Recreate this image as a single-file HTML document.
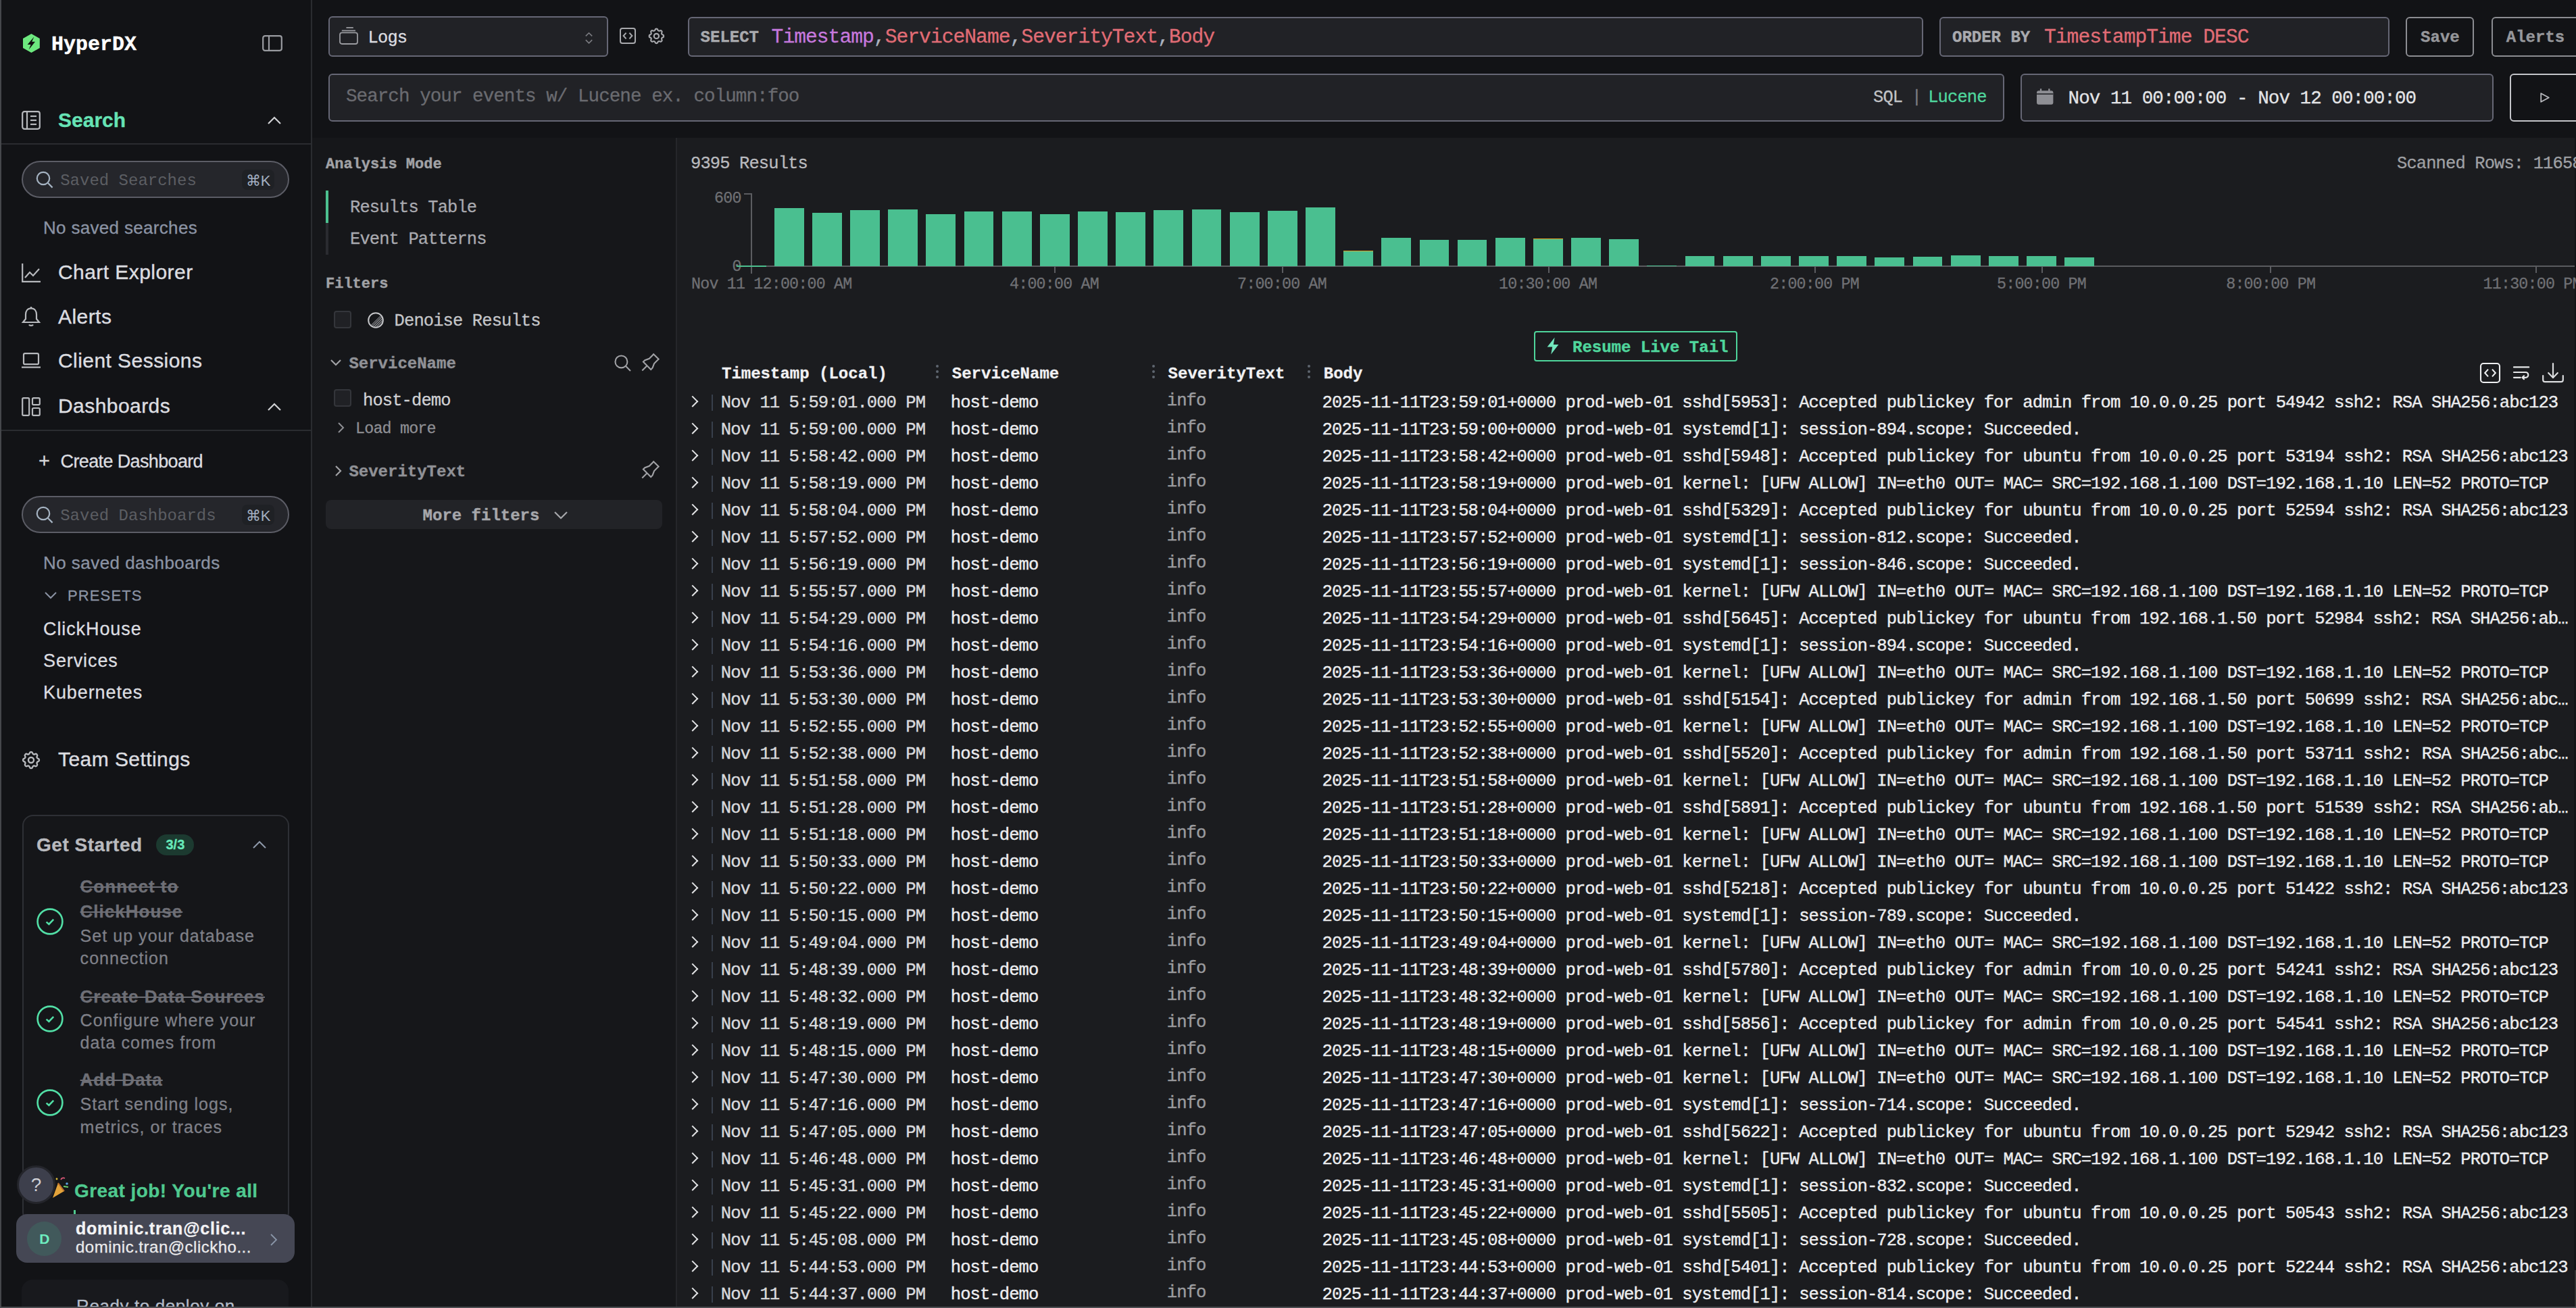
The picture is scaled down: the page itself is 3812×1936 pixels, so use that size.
<!DOCTYPE html>
<html><head><meta charset="utf-8">
<style>
html,body{margin:0;padding:0;background:#121316;overflow:hidden}
body{zoom:2;width:1906px;height:968px;position:relative;font-family:"Liberation Sans",sans-serif;color:#c1c2c5}
.a{position:absolute;white-space:nowrap}
.mono{font-family:"Liberation Mono",monospace}
svg{position:absolute;overflow:visible}
/* sidebar */
#sb{position:absolute;left:0;top:0;width:230px;height:968px;background:#121316;border-right:1px solid #2a2c30}
#lb{position:absolute;left:0;top:0;width:1px;height:968px;background:#45474b}
.nav{position:absolute;left:43px;font-size:15px;color:#dcdde0;line-height:20px;height:20px;letter-spacing:0.22px;margin-top:-0.3px;-webkit-text-stroke:0.2px currentColor}
.sinp{position:absolute;left:16px;width:195.8px;height:25.5px;border:1px solid #5c5d66;border-radius:14px;background:#25262b}
.sinp .ph{position:absolute;left:27.6px;top:1.2px;line-height:25px;font-family:"Liberation Mono",monospace;font-size:12px;color:#5c5e63}
.kbd{position:absolute;left:162px;top:5.5px;width:24px;height:15px;border-radius:4px;background:#1f2125;color:#a3b0c2;font-size:11px;line-height:17px;text-align:center}
.muted{color:#8b93a4}
#sb .a{-webkit-text-stroke:0.15px currentColor}
/* top bar */
.inp{position:absolute;background:#212226;border:1px solid #666775;border-radius:3px;box-sizing:border-box}
.btn{position:absolute;background:#121316;border:1px solid #8c8d92;border-radius:3px;box-sizing:border-box;font-family:"Liberation Mono",monospace;font-weight:bold;-webkit-text-stroke:0.2px currentColor;font-size:12px;color:#96979b;text-align:center}
/* panels */
#fp{position:absolute;left:231px;top:102px;width:269px;height:866px;background:#16171a;border-right:1px solid #25262a}
#rp{position:absolute;left:501px;top:102px;width:1404px;height:865px;background:#1b1c1f}
.lbl{position:absolute;font-family:"Liberation Mono",monospace;white-space:nowrap}
.cb{position:absolute;left:247px;width:11px;height:11px;border:1px solid #34363b;border-radius:2px;background:#202125}
.bar{position:absolute;width:21.9px;background:#4abf90;box-sizing:border-box}
.xl{position:absolute;top:203.4px;font-family:"Liberation Mono",monospace;font-size:11.66px;letter-spacing:-0.4px;-webkit-text-stroke:0.15px currentColor;line-height:14px;color:#6f7074;white-space:nowrap}
.tick{position:absolute;top:197px;width:1px;height:5px;background:#5c5d61}
/* table */
.th{position:absolute;top:268.5px;line-height:17px;font-family:"Liberation Mono",monospace;font-weight:bold;-webkit-text-stroke:0.15px currentColor;font-size:12px;color:#f1f1f3;white-space:nowrap}
.dots{position:absolute;top:269px;width:2px;height:12px}
.dots i{position:absolute;left:0;width:2px;height:2px;border-radius:1px;background:#5f6670}
.row{position:absolute;left:501px;width:1404px;height:20px;font-family:"Liberation Mono",monospace;font-size:12.8px;letter-spacing:-0.48px;-webkit-text-stroke:0.2px currentColor;line-height:20px;color:#ecedef;white-space:nowrap}
.row span{position:absolute;top:1.1px}
.row .chev{left:8.3px;top:6.8px;width:5.2px;height:5.2px;border-right:1.4px solid #e3e4e6;border-bottom:1.4px solid #e3e4e6;transform:rotate(-45deg)}
.row .rdiv{left:25.5px;top:4.5px;width:1px;height:12px;background:#38404c}
.row .c1{left:32.4px;color:#d9dadd}
.row .c2{left:202.4px}
.row .c3{left:362.4px;top:-0.1px;color:#9b9c9f}
.row .c4{left:477.3px;width:930px;overflow:hidden}
</style></head><body>

<!-- ================= SIDEBAR ================= -->
<div id="sb">
  <!-- logo -->
  <svg style="left:16.8px;top:25px" width="12.4" height="14" viewBox="0 0 12.4 14">
    <polygon points="6.2,0 12.4,3.5 12.4,10.5 6.2,14 0,10.5 0,3.5" fill="#6de97f"/>
    <path d="M8.2,2.3 L3.3,8.0 L5.8,8.0 L4.3,11.7 L9.0,5.9 L6.6,5.9 Z" fill="#111"/>
  </svg>
  <div class="a mono" style="left:38px;top:24px;font-size:15px;font-weight:bold;-webkit-text-stroke:0.2px currentColor;color:#fff;line-height:18px">HyperDX</div>
  <svg style="left:194px;top:26px" width="15" height="12" viewBox="0 0 15 12"><rect x="0.6" y="0.6" width="13.8" height="10.8" rx="1.5" fill="none" stroke="#9a9ca1" stroke-width="1.1"/><line x1="5" y1="0.6" x2="5" y2="11.4" stroke="#9a9ca1" stroke-width="1.1"/></svg>

  <!-- Search nav -->
  <svg style="left:16px;top:82px" width="14" height="14" viewBox="0 0 14 14" fill="none" stroke="#b8babe" stroke-width="1.1"><rect x="0.6" y="0.6" width="12.8" height="12.8" rx="1.5"/><line x1="4" y1="0.6" x2="4" y2="13.4"/><line x1="6.5" y1="4" x2="11" y2="4"/><line x1="6.5" y1="7" x2="11" y2="7"/><line x1="6.5" y1="10" x2="11" y2="10"/></svg>
  <div class="a" style="left:43px;top:79px;font-size:15px;font-weight:bold;color:#66e3b5;line-height:20px">Search</div>
  <svg style="left:198px;top:86px" width="10" height="6" viewBox="0 0 10 6"><polyline points="0.5,5.5 5,1 9.5,5.5" fill="none" stroke="#d0d1d4" stroke-width="1.1"/></svg>
  <div style="position:absolute;left:0;top:106px;width:230px;height:1px;background:#2a2c30"></div>

  <div class="sinp" style="top:119.1px">
    <svg style="left:9.5px;top:6.5px" width="13" height="13" viewBox="0 0 13 13" fill="none" stroke="#a5b3c2" stroke-width="1.1"><circle cx="5.5" cy="5.5" r="4.6"/><line x1="8.9" y1="8.9" x2="12.3" y2="12.3"/></svg>
    <div class="ph">Saved Searches</div>
    <div class="kbd">&#8984;K</div>
  </div>
  <div class="a muted" style="left:32px;top:160px;font-size:13px;line-height:17px;letter-spacing:0.16px">No saved searches</div>

  <!-- Chart Explorer -->
  <svg style="left:16px;top:195px" width="14" height="14" viewBox="0 0 14 14" fill="none" stroke="#b8babe" stroke-width="1.1"><polyline points="0.6,0 0.6,13.4 14,13.4"/><polyline points="2.5,10.5 6,6.5 8.5,9 13,4"/></svg>
  <div class="nav" style="top:192px">Chart Explorer</div>
  <!-- Alerts -->
  <svg style="left:16px;top:227px" width="14" height="15" viewBox="0 0 14 15" fill="none" stroke="#b8babe" stroke-width="1.1"><path d="M7,1.2 C4.3,1.2 3,3.4 3,5.8 L3,9 L1,11.5 L13,11.5 L11,9 L11,5.8 C11,3.4 9.7,1.2 7,1.2 Z"/><path d="M5.5,13.2 C6,14.2 8,14.2 8.5,13.2"/><line x1="7" y1="0" x2="7" y2="1.2"/></svg>
  <div class="nav" style="top:225px">Alerts</div>
  <!-- Client Sessions -->
  <svg style="left:16px;top:261px" width="14" height="12" viewBox="0 0 14 12" fill="none" stroke="#b8babe" stroke-width="1.1"><rect x="1.5" y="0.6" width="11" height="8" rx="1"/><line x1="0" y1="10.8" x2="14" y2="10.8"/></svg>
  <div class="nav" style="top:257.5px">Client Sessions</div>
  <!-- Dashboards -->
  <svg style="left:16px;top:294px" width="14" height="14" viewBox="0 0 14 14" fill="none" stroke="#b8babe" stroke-width="1.1"><rect x="0.6" y="0.6" width="5" height="12.8" rx="0.8"/><rect x="8" y="0.6" width="5.4" height="5" rx="0.8"/><rect x="8" y="8" width="5.4" height="5.4" rx="0.8"/></svg>
  <div class="nav" style="top:291px">Dashboards</div>
  <svg style="left:198px;top:298px" width="10" height="6" viewBox="0 0 10 6"><polyline points="0.5,5.5 5,1 9.5,5.5" fill="none" stroke="#d0d1d4" stroke-width="1.1"/></svg>
  <div style="position:absolute;left:0;top:318px;width:230px;height:1px;background:#2a2c30"></div>

  <div class="a" style="left:28.5px;top:332px;font-size:14.5px;line-height:18px;color:#d6d7da">+</div>
  <div class="a" style="left:44.8px;top:332.5px;font-size:13.5px;line-height:18px;color:#dcdde0;letter-spacing:-0.32px">Create Dashboard</div>

  <div class="sinp" style="top:367.1px">
    <svg style="left:9.5px;top:6.5px" width="13" height="13" viewBox="0 0 13 13" fill="none" stroke="#a5b3c2" stroke-width="1.1"><circle cx="5.5" cy="5.5" r="4.6"/><line x1="8.9" y1="8.9" x2="12.3" y2="12.3"/></svg>
    <div class="ph">Saved Dashboards</div>
    <div class="kbd">&#8984;K</div>
  </div>
  <div class="a muted" style="left:32px;top:408px;font-size:13px;line-height:17px;letter-spacing:0.23px">No saved dashboards</div>
  <svg style="left:33px;top:438px" width="9" height="5" viewBox="0 0 9 5"><polyline points="0.5,0.5 4.5,4.5 8.5,0.5" fill="none" stroke="#8b93a4" stroke-width="1"/></svg>
  <div class="a muted" style="left:50px;top:433px;font-size:11px;line-height:16px;letter-spacing:0.56px">PRESETS</div>
  <div class="a" style="left:32px;top:457px;font-size:13.5px;line-height:17px;color:#dcdde0;letter-spacing:0.45px">ClickHouse</div>
  <div class="a" style="left:32px;top:480.5px;font-size:13.5px;line-height:17px;color:#dcdde0;letter-spacing:0.45px">Services</div>
  <div class="a" style="left:32px;top:504px;font-size:13.5px;line-height:17px;color:#dcdde0;letter-spacing:0.45px">Kubernetes</div>

  <svg style="left:15px;top:554.5px" width="16" height="16" viewBox="0 0 24 24" fill="none" stroke="#b8babe" stroke-width="1.8"><path d="M10.325 4.317c.426 -1.756 2.924 -1.756 3.35 0a1.724 1.724 0 0 0 2.573 1.066c1.543 -.94 3.31 .826 2.37 2.37a1.724 1.724 0 0 0 1.065 2.572c1.756 .426 1.756 2.924 0 3.35a1.724 1.724 0 0 0 -1.066 2.573c.94 1.543 -.826 3.31 -2.37 2.37a1.724 1.724 0 0 0 -2.572 1.065c-.426 1.756 -2.924 1.756 -3.35 0a1.724 1.724 0 0 0 -2.573 -1.066c-1.543 .94 -3.31 -.826 -2.37 -2.37a1.724 1.724 0 0 0 -1.065 -2.572c-1.756 -.426 -1.756 -2.924 0 -3.35a1.724 1.724 0 0 0 1.066 -2.573c-.94 -1.543 .826 -3.31 2.37 -2.37c1 .608 2.296 .07 2.572 -1.065z"/><circle cx="12" cy="12" r="3"/></svg>
  <div class="nav" style="top:552.5px">Team Settings</div>

  <!-- Get started card -->
  <div style="position:absolute;left:16.5px;top:603px;width:195.5px;height:300px;border:1px solid #2e3035;border-radius:8px;background:#151619"></div>
  <div class="a" style="left:27px;top:616.3px;font-size:14px;font-weight:bold;line-height:18px;color:#b9babe;letter-spacing:0.26px">Get Started</div>
  <div class="a" style="left:115.7px;top:617.5px;width:28px;height:15.5px;border-radius:8px;background:#1c3a30;color:#66e8b8;font-size:10px;font-weight:bold;line-height:15.5px;text-align:center">3/3</div>
  <svg style="left:187px;top:622px" width="10" height="6" viewBox="0 0 10 6"><polyline points="0.5,5.5 5,1 9.5,5.5" fill="none" stroke="#8e99aa" stroke-width="1"/></svg>

  <svg style="left:27.2px;top:672px" width="20" height="20" viewBox="0 0 20 20" fill="none" stroke="#52dfa6" stroke-width="1.3"><circle cx="10" cy="10" r="9.2"/><polyline points="7.3,10.3 9.2,12 12.6,8.4"/></svg>
  <div class="a" style="left:59.3px;top:647.5px;font-size:13px;line-height:17px;font-weight:bold;color:#6e6f76;text-decoration:line-through;letter-spacing:0.5px">Connect to</div>
  <div class="a" style="left:59.3px;top:666px;font-size:13px;line-height:17px;font-weight:bold;color:#6e6f76;text-decoration:line-through;letter-spacing:0.5px">ClickHouse</div>
  <div class="a" style="left:59.3px;top:684px;font-size:12.5px;line-height:17px;color:#7f8088;letter-spacing:0.52px">Set up your database</div>
  <div class="a" style="left:59.3px;top:700.5px;font-size:12.5px;line-height:17px;color:#7f8088;letter-spacing:0.52px">connection</div>

  <svg style="left:27.2px;top:744px" width="20" height="20" viewBox="0 0 20 20" fill="none" stroke="#52dfa6" stroke-width="1.3"><circle cx="10" cy="10" r="9.2"/><polyline points="7.3,10.3 9.2,12 12.6,8.4"/></svg>
  <div class="a" style="left:59.3px;top:729px;font-size:13px;line-height:17px;font-weight:bold;color:#6e6f76;text-decoration:line-through;letter-spacing:0.5px">Create Data Sources</div>
  <div class="a" style="left:59.3px;top:746.5px;font-size:12.5px;line-height:17px;color:#7f8088;letter-spacing:0.52px">Configure where your</div>
  <div class="a" style="left:59.3px;top:763px;font-size:12.5px;line-height:17px;color:#7f8088;letter-spacing:0.52px">data comes from</div>

  <svg style="left:27.2px;top:806px" width="20" height="20" viewBox="0 0 20 20" fill="none" stroke="#52dfa6" stroke-width="1.3"><circle cx="10" cy="10" r="9.2"/><polyline points="7.3,10.3 9.2,12 12.6,8.4"/></svg>
  <div class="a" style="left:59.3px;top:790.5px;font-size:13px;line-height:17px;font-weight:bold;color:#6e6f76;text-decoration:line-through;letter-spacing:0.5px">Add Data</div>
  <div class="a" style="left:59.3px;top:808.5px;font-size:12.5px;line-height:17px;color:#7f8088;letter-spacing:0.52px">Start sending logs,</div>
  <div class="a" style="left:59.3px;top:825.5px;font-size:12.5px;line-height:17px;color:#7f8088;letter-spacing:0.52px">metrics, or traces</div>

  <div class="a" style="left:55px;top:872.5px;font-size:14px;font-weight:bold;line-height:18px;color:#4fc98f;letter-spacing:0.22px">Great job! You're all</div>
  <div style="position:absolute;left:54.5px;top:895.5px;width:1.5px;height:3px;background:#4fc98f"></div>
  <svg style="left:38px;top:869px" width="14" height="19" viewBox="0 0 14 19"><path d="M1,17.5 L5,6.5 L9.5,12.5 Z" fill="#e3a33a"/><path d="M5,6.5 L9.5,12.5" stroke="#b86b2a" stroke-width="1"/><path d="M7,4 Q8,2 10,3" stroke="#e05a7a" stroke-width="0.9" fill="none"/><circle cx="11.5" cy="7" r="0.9" fill="#5aa0e0"/><path d="M9,9 L12.5,9.5" stroke="#6bd06b" stroke-width="0.9"/><circle cx="4" cy="3.5" r="0.7" fill="#e3c23a"/></svg>
  <div style="position:absolute;left:12.5px;top:862.5px;width:25.5px;height:25.5px;border-radius:50%;background:#3d3f4c;border:1.5px solid #24252b;color:#cfd0d6;font-size:14px;line-height:25.5px;text-align:center">?</div>

  <!-- user card -->
  <div style="position:absolute;left:12px;top:898.5px;width:206px;height:36px;border-radius:8px;background:#454754"></div>
  <div style="position:absolute;left:20.2px;top:903.8px;width:25.5px;height:25.5px;border-radius:50%;background:#41595b;color:#6eeec0;font-size:10.5px;font-weight:bold;line-height:25.5px;text-align:center">D</div>
  <div class="a" style="left:56px;top:901px;font-size:12.5px;font-weight:bold;line-height:16px;color:#f3f3f5;letter-spacing:0.38px">dominic.tran@clic...</div>
  <div class="a" style="left:56px;top:915px;font-size:12px;line-height:16px;color:#eaeaec;letter-spacing:0.25px">dominic.tran@clickho...</div>
  <svg style="left:200px;top:913px" width="5" height="9" viewBox="0 0 5 9"><polyline points="0.5,0.5 4.5,4.5 0.5,8.5" fill="none" stroke="#8a96a8" stroke-width="0.9"/></svg>

  <div style="position:absolute;left:16px;top:947px;width:197.5px;height:40px;border-radius:8px;background:#18191d"></div>
  <div class="a" style="left:56.5px;top:958px;font-size:13px;line-height:17px;color:#b4bcc8;letter-spacing:0.3px">Ready to deploy on</div>
</div>
<div id="lb"></div>

<!-- ================= TOP BAR ================= -->
<div class="inp" style="left:243px;top:12px;width:207px;height:30px">
  <svg style="left:7px;top:6.9px" width="14" height="13.5" viewBox="0 0 14 13.5" fill="none" stroke="#9a9ba0" stroke-width="0.9"><rect x="0.5" y="4.2" width="13" height="8.3" rx="1.5"/><line x1="1.9" y1="2.7" x2="12" y2="2.7"/><line x1="5.2" y1="0.5" x2="10.4" y2="0.5"/></svg>
  <div class="a mono" style="left:28.3px;top:7px;font-size:12.72px;letter-spacing:-0.43px;-webkit-text-stroke:0.15px currentColor;line-height:17px;color:#dcdde0">Logs</div>
  <svg style="left:188.8px;top:11px" width="5.5" height="8.3" viewBox="0 0 5.5 8.3" fill="none" stroke="#7c7d82" stroke-width="0.8"><polyline points="0.4,2.7 2.75,0.4 5.1,2.7"/><polyline points="0.4,5.6 2.75,7.9 5.1,5.6"/></svg>
</div>
<svg style="left:458.4px;top:20.4px" width="12" height="12" viewBox="0 0 12 12" fill="none" stroke="#a8a9ad" stroke-width="1"><rect x="0.5" y="0.5" width="11" height="11" rx="1.5"/><polyline points="4.8,3.8 2.8,6 4.8,8.2"/><polyline points="7.2,3.8 9.2,6 7.2,8.2"/></svg>
<svg style="left:478.4px;top:19.4px" width="14.4" height="14.4" viewBox="0 0 24 24" fill="none" stroke="#a8a9ad" stroke-width="1.8"><path d="M10.325 4.317c.426 -1.756 2.924 -1.756 3.35 0a1.724 1.724 0 0 0 2.573 1.066c1.543 -.94 3.31 .826 2.37 2.37a1.724 1.724 0 0 0 1.065 2.572c1.756 .426 1.756 2.924 0 3.35a1.724 1.724 0 0 0 -1.066 2.573c.94 1.543 -.826 3.31 -2.37 2.37a1.724 1.724 0 0 0 -2.572 1.065c-.426 1.756 -2.924 1.756 -3.35 0a1.724 1.724 0 0 0 -2.573 -1.066c-1.543 .94 -3.31 -.826 -2.37 -2.37a1.724 1.724 0 0 0 -1.065 -2.572c-1.756 -.426 -1.756 -2.924 0 -3.35a1.724 1.724 0 0 0 1.066 -2.573c-.94 -1.543 .826 -3.31 2.37 -2.37c1 .608 2.296 .07 2.572 -1.065z"/><circle cx="12" cy="12" r="3"/></svg>

<div class="inp" style="left:508.8px;top:12.3px;width:914px;height:29.5px">
  <div class="a mono" style="left:8.5px;top:6px;font-size:12px;font-weight:bold;-webkit-text-stroke:0.2px currentColor;line-height:17px;color:#a9aaae">SELECT</div>
  <div class="a mono" style="left:61px;top:5px;font-size:14.84px;letter-spacing:-0.50px;-webkit-text-stroke:0.15px currentColor;line-height:18px;color:#e06c75"><span style="color:#c678dd">Timestamp</span><span style="color:#abb2bf">,</span>ServiceName<span style="color:#abb2bf">,</span>SeverityText<span style="color:#abb2bf">,</span>Body</div>
</div>
<div class="inp" style="left:1435px;top:12.3px;width:333px;height:29.5px">
  <div class="a mono" style="left:8.5px;top:6px;font-size:12px;font-weight:bold;-webkit-text-stroke:0.2px currentColor;line-height:17px;color:#a9aaae">ORDER BY</div>
  <div class="a mono" style="left:76.5px;top:5px;font-size:14.84px;letter-spacing:-0.50px;-webkit-text-stroke:0.15px currentColor;line-height:18px;color:#e06c75">TimestampTime DESC</div>
</div>
<div class="btn" style="left:1780.2px;top:12.3px;width:50.5px;height:29.5px;line-height:28.9px">Save</div>
<div class="btn" style="left:1843.4px;top:12.3px;width:80px;height:29.5px;line-height:28.9px;text-align:left;padding-left:10px">Alerts</div>

<div class="inp" style="left:243px;top:54.3px;width:1240.1px;height:35.8px">
  <div class="a mono" style="left:12px;top:7.9px;font-size:13.78px;letter-spacing:-0.47px;-webkit-text-stroke:0.15px currentColor;line-height:17px;color:#6a6b70">Search your events w/ Lucene ex. column:foo</div>
  <div class="a mono" style="left:1142px;top:8.5px;font-size:12.72px;letter-spacing:-0.43px;-webkit-text-stroke:0.15px currentColor;line-height:17px;color:#c1c2c5">SQL</div><div class="a mono" style="left:1170.4px;top:8.5px;font-size:12.72px;letter-spacing:-0.43px;-webkit-text-stroke:0.15px currentColor;line-height:17px;color:#7b7c80">|</div><div class="a mono" style="left:1182.6px;top:8.5px;font-size:12.72px;letter-spacing:-0.43px;-webkit-text-stroke:0.15px currentColor;line-height:17px;color:#4fd69c">Lucene</div>
</div>
<div class="inp" style="left:1494.8px;top:54.3px;width:350px;height:35.8px">
  <svg style="left:11px;top:10px" width="12.2" height="12" viewBox="0 0 12.5 12"><rect x="0" y="1.5" width="12.5" height="10.5" rx="1.5" fill="#8e8f94"/><rect x="2.5" y="0" width="1.2" height="3" fill="#8e8f94"/><rect x="8.8" y="0" width="1.2" height="3" fill="#8e8f94"/><rect x="0" y="3.6" width="12.5" height="0.8" fill="#212226"/></svg>
  <div class="a mono" style="left:34.5px;top:9.3px;font-size:13.78px;letter-spacing:-0.47px;-webkit-text-stroke:0.15px currentColor;line-height:17px;color:#e3e4e6">Nov 11 00:00:00 - Nov 12 00:00:00</div>
</div>
<div class="btn" style="left:1857.2px;top:54.3px;width:80px;height:35.8px;border-color:#c4c5c9">
  <svg style="left:21.3px;top:13.2px" width="7" height="7.5" viewBox="0 0 7 7.5"><polygon points="0.6,0.6 6.4,3.75 0.6,6.9" fill="none" stroke="#b9babe" stroke-width="0.9" stroke-linejoin="round"/></svg>
</div>

<!-- ================= FILTER PANEL ================= -->
<div id="fp"></div>
<div class="lbl" style="left:241px;top:114px;font-size:11px;font-weight:bold;-webkit-text-stroke:0.2px currentColor;line-height:16px;color:#a1a2a6">Analysis Mode</div>
<div style="position:absolute;left:241px;top:141px;width:2px;height:24px;background:#4cc08f"></div>
<div style="position:absolute;left:241px;top:165px;width:2px;height:23.5px;background:#2a2b30"></div>
<div class="lbl" style="left:259px;top:146px;font-size:12.72px;letter-spacing:-0.43px;-webkit-text-stroke:0.15px currentColor;line-height:16px;color:#a9aab0">Results Table</div>
<div class="lbl" style="left:259px;top:169.5px;font-size:12.72px;letter-spacing:-0.43px;-webkit-text-stroke:0.15px currentColor;line-height:16px;color:#a9aab0">Event Patterns</div>
<div class="lbl" style="left:241px;top:202.6px;font-size:11px;font-weight:bold;-webkit-text-stroke:0.2px currentColor;line-height:16px;color:#a1a2a6">Filters</div>

<div class="cb" style="top:230px"></div>
<svg style="left:271.8px;top:230.8px" width="12" height="12" viewBox="0 0 12 12"><defs><pattern id="hp" width="1.2" height="1.2" patternUnits="userSpaceOnUse" patternTransform="rotate(45)"><rect width="0.6" height="1.2" fill="#9a9ba0"/></pattern></defs><path d="M9.8,2.2 A5.4,5.4 0 0 1 2.2,9.8 Z" fill="url(#hp)"/><circle cx="6" cy="6" r="5.4" fill="none" stroke="#c5c6c9" stroke-width="1"/></svg>
<div class="lbl" style="left:291.8px;top:230.1px;font-size:12.72px;letter-spacing:-0.43px;-webkit-text-stroke:0.15px currentColor;line-height:16px;color:#c5c6c9">Denoise Results</div>

<svg style="left:244.5px;top:266px" width="8" height="5" viewBox="0 0 8 5"><polyline points="0.5,0.5 4,4 7.5,0.5" fill="none" stroke="#a1a2a6" stroke-width="1.1"/></svg>
<div class="lbl" style="left:258.2px;top:261.3px;font-size:12px;font-weight:bold;-webkit-text-stroke:0.2px currentColor;line-height:16px;color:#909196">ServiceName</div>
<svg style="left:454.7px;top:262.5px" width="12.5" height="12.5" viewBox="0 0 12 12" fill="none" stroke="#a1a2a6" stroke-width="1"><circle cx="5" cy="5" r="4.3"/><line x1="8.2" y1="8.2" x2="11.5" y2="11.5"/></svg>
<svg style="left:471.6px;top:258.3px" width="19.4" height="19.4" viewBox="0 0 24 24" fill="none" stroke="#a1a2a6" stroke-width="1.3"><path d="M15 4.5l-4 4l-4 1.5l-1.5 1.5l7 7l1.5 -1.5l1.5 -4l4 -4"/><line x1="9" y1="15" x2="4.5" y2="19.5"/><line x1="14.5" y1="4" x2="20" y2="9.5"/></svg>

<div class="cb" style="top:288.2px"></div>
<div class="lbl" style="left:268.5px;top:289.1px;font-size:12.72px;letter-spacing:-0.43px;-webkit-text-stroke:0.15px currentColor;line-height:16px;color:#d0d1d4">host-demo</div>
<svg style="left:249.8px;top:312.5px" width="5" height="8" viewBox="0 0 5 8"><polyline points="0.5,0.5 4,4 0.5,7.5" fill="none" stroke="#8e8f94" stroke-width="1"/></svg>
<div class="lbl" style="left:263px;top:309.5px;font-size:11.66px;letter-spacing:-0.40px;-webkit-text-stroke:0.15px currentColor;line-height:16px;color:#8e8f94">Load more</div>

<svg style="left:248px;top:344.5px" width="5" height="8" viewBox="0 0 5 8"><polyline points="0.5,0.5 4,4 0.5,7.5" fill="none" stroke="#a1a2a6" stroke-width="1.1"/></svg>
<div class="lbl" style="left:258.2px;top:341.3px;font-size:12px;font-weight:bold;-webkit-text-stroke:0.2px currentColor;line-height:16px;color:#909196">SeverityText</div>
<svg style="left:471.6px;top:337.8px" width="19.4" height="19.4" viewBox="0 0 24 24" fill="none" stroke="#a1a2a6" stroke-width="1.3"><path d="M15 4.5l-4 4l-4 1.5l-1.5 1.5l7 7l1.5 -1.5l1.5 -4l4 -4"/><line x1="9" y1="15" x2="4.5" y2="19.5"/><line x1="14.5" y1="4" x2="20" y2="9.5"/></svg>

<div style="position:absolute;left:241px;top:370px;width:249px;height:21.7px;border-radius:4px;background:#222327"></div>
<div class="lbl" style="left:312.8px;top:374.1px;font-size:12px;font-weight:bold;-webkit-text-stroke:0.2px currentColor;line-height:16px;color:#a6a7ab">More filters</div>
<svg style="left:410px;top:378.5px" width="10" height="6" viewBox="0 0 10 6"><polyline points="0.5,0.5 5,5 9.5,0.5" fill="none" stroke="#a6a7ab" stroke-width="1.1"/></svg>

<!-- ================= RESULTS ================= -->
<div id="rp"></div>
<div class="lbl" style="left:511px;top:113.5px;font-size:12.72px;letter-spacing:-0.43px;-webkit-text-stroke:0.15px currentColor;line-height:16px;color:#b9babe">9395 Results</div>
<div class="lbl" style="left:1773.5px;top:113.5px;font-size:12.72px;letter-spacing:-0.43px;-webkit-text-stroke:0.15px currentColor;line-height:16px;color:#9fa0a4">Scanned Rows: 11658</div>

<!-- chart -->
<div class="xl" style="left:528.5px;top:140px;width:17px;text-align:right">600</div>
<div class="xl" style="left:538.4px;top:190.5px;width:10px;text-align:right">0</div>
<div style="position:absolute;left:550.4px;top:143px;width:5px;height:1px;background:#5c5d61"></div>
<div style="position:absolute;left:555.4px;top:143px;width:1px;height:59.5px;background:#5c5d61"></div>
<div style="position:absolute;left:556px;top:196.6px;width:1349px;height:1px;background:#5a5b5f"></div>
<div style="position:absolute;left:545px;top:196.3px;width:22px;height:1.2px;background:#4cc08f"></div>
<div class="bar" style="left:572.90px;top:154.00px;height:43.00px"></div>
<div class="bar" style="left:600.98px;top:157.50px;height:39.50px"></div>
<div class="bar" style="left:629.06px;top:155.60px;height:41.40px"></div>
<div class="bar" style="left:657.14px;top:155.00px;height:42.00px"></div>
<div class="bar" style="left:685.22px;top:158.50px;height:38.50px"></div>
<div class="bar" style="left:713.30px;top:156.40px;height:40.60px"></div>
<div class="bar" style="left:741.38px;top:156.40px;height:40.60px"></div>
<div class="bar" style="left:769.46px;top:158.50px;height:38.50px"></div>
<div class="bar" style="left:797.54px;top:156.60px;height:40.40px"></div>
<div class="bar" style="left:825.62px;top:157.10px;height:39.90px"></div>
<div class="bar" style="left:853.70px;top:155.40px;height:41.60px"></div>
<div class="bar" style="left:881.78px;top:155.00px;height:42.00px"></div>
<div class="bar" style="left:909.86px;top:156.90px;height:40.10px"></div>
<div class="bar" style="left:937.94px;top:155.80px;height:41.20px"></div>
<div class="bar" style="left:966.02px;top:153.40px;height:43.60px"></div>
<div class="bar" style="left:994.10px;top:185.70px;height:11.30px;border-top:0.6px solid #e0a526"></div>
<div class="bar" style="left:1022.18px;top:176.00px;height:21.00px"></div>
<div class="bar" style="left:1050.26px;top:177.40px;height:19.60px"></div>
<div class="bar" style="left:1078.34px;top:177.60px;height:19.40px"></div>
<div class="bar" style="left:1106.42px;top:176.00px;height:21.00px"></div>
<div class="bar" style="left:1134.50px;top:176.50px;height:20.50px;border-top:0.6px solid #e0a526"></div>
<div class="bar" style="left:1162.58px;top:176.00px;height:21.00px"></div>
<div class="bar" style="left:1190.66px;top:176.90px;height:20.10px"></div>
<div class="bar" style="left:1218.74px;top:196.30px;height:0.70px"></div>
<div class="bar" style="left:1246.82px;top:189.50px;height:7.50px"></div>
<div class="bar" style="left:1274.90px;top:189.50px;height:7.50px"></div>
<div class="bar" style="left:1302.98px;top:189.50px;height:7.50px"></div>
<div class="bar" style="left:1331.06px;top:189.70px;height:7.30px"></div>
<div class="bar" style="left:1359.14px;top:189.70px;height:7.30px"></div>
<div class="bar" style="left:1387.22px;top:190.40px;height:6.60px"></div>
<div class="bar" style="left:1415.30px;top:190.00px;height:7.00px"></div>
<div class="bar" style="left:1443.38px;top:189.00px;height:8.00px"></div>
<div class="bar" style="left:1471.46px;top:189.50px;height:7.50px"></div>
<div class="bar" style="left:1499.54px;top:189.50px;height:7.50px"></div>
<div class="bar" style="left:1527.62px;top:190.40px;height:6.60px"></div>
<div class="tick" style="left:780px"></div>
<div class="tick" style="left:948.5px"></div>
<div class="tick" style="left:1145.5px"></div>
<div class="tick" style="left:1342.5px"></div>
<div class="tick" style="left:1510.5px"></div>
<div class="tick" style="left:1679.5px"></div>
<div class="tick" style="left:1876.2px"></div>
<div class="xl" style="left:511.5px">Nov 11 12:00:00 AM</div>
<div class="xl" style="left:747px">4:00:00 AM</div>
<div class="xl" style="left:915.5px">7:00:00 AM</div>
<div class="xl" style="left:1109px">10:30:00 AM</div>
<div class="xl" style="left:1309.5px">2:00:00 PM</div>
<div class="xl" style="left:1477.5px">5:00:00 PM</div>
<div class="xl" style="left:1647.1px">8:00:00 PM</div>
<div class="xl" style="left:1837.3px">11:30:00 PM</div>

<!-- live tail -->
<div style="position:absolute;left:1135px;top:245px;width:150.5px;height:22.3px;box-sizing:border-box;border:1px solid #4fd69c;border-radius:2px"></div>
<svg style="left:1143.8px;top:249.5px" width="10" height="13" viewBox="0 0 10 13"><path d="M6.3,0.3 L0.8,7.3 L4.6,7.3 L3.6,12.7 L9.2,5.5 L5.4,5.5 Z" fill="#72e6bd"/></svg>
<div class="lbl" style="left:1163.5px;top:249.6px;font-size:12px;font-weight:bold;-webkit-text-stroke:0.2px currentColor;line-height:16px;color:#4fd69c">Resume Live Tail</div>

<!-- table header -->
<div class="th" style="left:534px">Timestamp (Local)</div>
<div class="th" style="left:704.4px">ServiceName</div>
<div class="th" style="left:864.3px">SeverityText</div>
<div class="th" style="left:979.4px">Body</div>
<div class="dots" style="left:692.5px"><i style="top:1px"></i><i style="top:5px"></i><i style="top:9px"></i></div>
<div class="dots" style="left:852.5px"><i style="top:1px"></i><i style="top:5px"></i><i style="top:9px"></i></div>
<div class="dots" style="left:967.5px"><i style="top:1px"></i><i style="top:5px"></i><i style="top:9px"></i></div>

<svg style="left:1835px;top:268.5px" width="15" height="15" viewBox="0 0 15 15" fill="none" stroke="#eeeff1" stroke-width="1.05"><rect x="0.5" y="0.5" width="14" height="14" rx="2"/><polyline points="6,4.8 3.6,7.5 6,10.2"/><polyline points="9,4.8 11.4,7.5 9,10.2"/></svg>
<svg style="left:1859px;top:270px" width="14" height="12" viewBox="0 0 14 12" fill="none" stroke="#e6e7e9" stroke-width="1.1" stroke-linecap="round" stroke-linejoin="round"><line x1="1" y1="1.7" x2="12.1" y2="1.7"/><path d="M1,5.5 L9.7,5.5 A1.95,1.95 0 0 1 9.7,9.4 L7.3,9.4"/><polyline points="8.5,8.2 7.3,9.4 8.5,10.6"/><line x1="1" y1="9.4" x2="5.9" y2="9.4"/></svg>
<svg style="left:1881px;top:268.5px" width="16" height="15" viewBox="0 0 16 15" fill="none" stroke="#dcdddf" stroke-width="1.1" stroke-linecap="round" stroke-linejoin="round"><path d="M0.6,9.5 V12.6 a1.5,1.5 0 0 0 1.5,1.5 H13.9 a1.5,1.5 0 0 0 1.5,-1.5 V9.5"/><line x1="8" y1="0.5" x2="8" y2="11"/><polyline points="4.6,7.5 8,11 11.4,7.5"/></svg>

<!-- rows -->
<div class="row" style="top:287.3px"><span class="chev"></span><span class="rdiv"></span><span class="c1">Nov 11 5:59:01.000 PM</span><span class="c2">host-demo</span><span class="c3">info</span><span class="c4">2025-11-11T23:59:01+0000 prod-web-01 sshd[5953]: Accepted publickey for admin from 10.0.0.25 port 54942 ssh2: RSA SHA256:abc123</span></div>
<div class="row" style="top:307.3px"><span class="chev"></span><span class="rdiv"></span><span class="c1">Nov 11 5:59:00.000 PM</span><span class="c2">host-demo</span><span class="c3">info</span><span class="c4">2025-11-11T23:59:00+0000 prod-web-01 systemd[1]: session-894.scope: Succeeded.</span></div>
<div class="row" style="top:327.3px"><span class="chev"></span><span class="rdiv"></span><span class="c1">Nov 11 5:58:42.000 PM</span><span class="c2">host-demo</span><span class="c3">info</span><span class="c4">2025-11-11T23:58:42+0000 prod-web-01 sshd[5948]: Accepted publickey for ubuntu from 10.0.0.25 port 53194 ssh2: RSA SHA256:abc123</span></div>
<div class="row" style="top:347.3px"><span class="chev"></span><span class="rdiv"></span><span class="c1">Nov 11 5:58:19.000 PM</span><span class="c2">host-demo</span><span class="c3">info</span><span class="c4">2025-11-11T23:58:19+0000 prod-web-01 kernel: [UFW ALLOW] IN=eth0 OUT= MAC= SRC=192.168.1.100 DST=192.168.1.10 LEN=52 PROTO=TCP</span></div>
<div class="row" style="top:367.3px"><span class="chev"></span><span class="rdiv"></span><span class="c1">Nov 11 5:58:04.000 PM</span><span class="c2">host-demo</span><span class="c3">info</span><span class="c4">2025-11-11T23:58:04+0000 prod-web-01 sshd[5329]: Accepted publickey for ubuntu from 10.0.0.25 port 52594 ssh2: RSA SHA256:abc123</span></div>
<div class="row" style="top:387.3px"><span class="chev"></span><span class="rdiv"></span><span class="c1">Nov 11 5:57:52.000 PM</span><span class="c2">host-demo</span><span class="c3">info</span><span class="c4">2025-11-11T23:57:52+0000 prod-web-01 systemd[1]: session-812.scope: Succeeded.</span></div>
<div class="row" style="top:407.3px"><span class="chev"></span><span class="rdiv"></span><span class="c1">Nov 11 5:56:19.000 PM</span><span class="c2">host-demo</span><span class="c3">info</span><span class="c4">2025-11-11T23:56:19+0000 prod-web-01 systemd[1]: session-846.scope: Succeeded.</span></div>
<div class="row" style="top:427.3px"><span class="chev"></span><span class="rdiv"></span><span class="c1">Nov 11 5:55:57.000 PM</span><span class="c2">host-demo</span><span class="c3">info</span><span class="c4">2025-11-11T23:55:57+0000 prod-web-01 kernel: [UFW ALLOW] IN=eth0 OUT= MAC= SRC=192.168.1.100 DST=192.168.1.10 LEN=52 PROTO=TCP</span></div>
<div class="row" style="top:447.3px"><span class="chev"></span><span class="rdiv"></span><span class="c1">Nov 11 5:54:29.000 PM</span><span class="c2">host-demo</span><span class="c3">info</span><span class="c4">2025-11-11T23:54:29+0000 prod-web-01 sshd[5645]: Accepted publickey for ubuntu from 192.168.1.50 port 52984 ssh2: RSA SHA256:ab…</span></div>
<div class="row" style="top:467.3px"><span class="chev"></span><span class="rdiv"></span><span class="c1">Nov 11 5:54:16.000 PM</span><span class="c2">host-demo</span><span class="c3">info</span><span class="c4">2025-11-11T23:54:16+0000 prod-web-01 systemd[1]: session-894.scope: Succeeded.</span></div>
<div class="row" style="top:487.3px"><span class="chev"></span><span class="rdiv"></span><span class="c1">Nov 11 5:53:36.000 PM</span><span class="c2">host-demo</span><span class="c3">info</span><span class="c4">2025-11-11T23:53:36+0000 prod-web-01 kernel: [UFW ALLOW] IN=eth0 OUT= MAC= SRC=192.168.1.100 DST=192.168.1.10 LEN=52 PROTO=TCP</span></div>
<div class="row" style="top:507.3px"><span class="chev"></span><span class="rdiv"></span><span class="c1">Nov 11 5:53:30.000 PM</span><span class="c2">host-demo</span><span class="c3">info</span><span class="c4">2025-11-11T23:53:30+0000 prod-web-01 sshd[5154]: Accepted publickey for admin from 192.168.1.50 port 50699 ssh2: RSA SHA256:abc…</span></div>
<div class="row" style="top:527.3px"><span class="chev"></span><span class="rdiv"></span><span class="c1">Nov 11 5:52:55.000 PM</span><span class="c2">host-demo</span><span class="c3">info</span><span class="c4">2025-11-11T23:52:55+0000 prod-web-01 kernel: [UFW ALLOW] IN=eth0 OUT= MAC= SRC=192.168.1.100 DST=192.168.1.10 LEN=52 PROTO=TCP</span></div>
<div class="row" style="top:547.3px"><span class="chev"></span><span class="rdiv"></span><span class="c1">Nov 11 5:52:38.000 PM</span><span class="c2">host-demo</span><span class="c3">info</span><span class="c4">2025-11-11T23:52:38+0000 prod-web-01 sshd[5520]: Accepted publickey for admin from 192.168.1.50 port 53711 ssh2: RSA SHA256:abc…</span></div>
<div class="row" style="top:567.3px"><span class="chev"></span><span class="rdiv"></span><span class="c1">Nov 11 5:51:58.000 PM</span><span class="c2">host-demo</span><span class="c3">info</span><span class="c4">2025-11-11T23:51:58+0000 prod-web-01 kernel: [UFW ALLOW] IN=eth0 OUT= MAC= SRC=192.168.1.100 DST=192.168.1.10 LEN=52 PROTO=TCP</span></div>
<div class="row" style="top:587.3px"><span class="chev"></span><span class="rdiv"></span><span class="c1">Nov 11 5:51:28.000 PM</span><span class="c2">host-demo</span><span class="c3">info</span><span class="c4">2025-11-11T23:51:28+0000 prod-web-01 sshd[5891]: Accepted publickey for ubuntu from 192.168.1.50 port 51539 ssh2: RSA SHA256:ab…</span></div>
<div class="row" style="top:607.3px"><span class="chev"></span><span class="rdiv"></span><span class="c1">Nov 11 5:51:18.000 PM</span><span class="c2">host-demo</span><span class="c3">info</span><span class="c4">2025-11-11T23:51:18+0000 prod-web-01 kernel: [UFW ALLOW] IN=eth0 OUT= MAC= SRC=192.168.1.100 DST=192.168.1.10 LEN=52 PROTO=TCP</span></div>
<div class="row" style="top:627.3px"><span class="chev"></span><span class="rdiv"></span><span class="c1">Nov 11 5:50:33.000 PM</span><span class="c2">host-demo</span><span class="c3">info</span><span class="c4">2025-11-11T23:50:33+0000 prod-web-01 kernel: [UFW ALLOW] IN=eth0 OUT= MAC= SRC=192.168.1.100 DST=192.168.1.10 LEN=52 PROTO=TCP</span></div>
<div class="row" style="top:647.3px"><span class="chev"></span><span class="rdiv"></span><span class="c1">Nov 11 5:50:22.000 PM</span><span class="c2">host-demo</span><span class="c3">info</span><span class="c4">2025-11-11T23:50:22+0000 prod-web-01 sshd[5218]: Accepted publickey for ubuntu from 10.0.0.25 port 51422 ssh2: RSA SHA256:abc123</span></div>
<div class="row" style="top:667.3px"><span class="chev"></span><span class="rdiv"></span><span class="c1">Nov 11 5:50:15.000 PM</span><span class="c2">host-demo</span><span class="c3">info</span><span class="c4">2025-11-11T23:50:15+0000 prod-web-01 systemd[1]: session-789.scope: Succeeded.</span></div>
<div class="row" style="top:687.3px"><span class="chev"></span><span class="rdiv"></span><span class="c1">Nov 11 5:49:04.000 PM</span><span class="c2">host-demo</span><span class="c3">info</span><span class="c4">2025-11-11T23:49:04+0000 prod-web-01 kernel: [UFW ALLOW] IN=eth0 OUT= MAC= SRC=192.168.1.100 DST=192.168.1.10 LEN=52 PROTO=TCP</span></div>
<div class="row" style="top:707.3px"><span class="chev"></span><span class="rdiv"></span><span class="c1">Nov 11 5:48:39.000 PM</span><span class="c2">host-demo</span><span class="c3">info</span><span class="c4">2025-11-11T23:48:39+0000 prod-web-01 sshd[5780]: Accepted publickey for admin from 10.0.0.25 port 54241 ssh2: RSA SHA256:abc123</span></div>
<div class="row" style="top:727.3px"><span class="chev"></span><span class="rdiv"></span><span class="c1">Nov 11 5:48:32.000 PM</span><span class="c2">host-demo</span><span class="c3">info</span><span class="c4">2025-11-11T23:48:32+0000 prod-web-01 kernel: [UFW ALLOW] IN=eth0 OUT= MAC= SRC=192.168.1.100 DST=192.168.1.10 LEN=52 PROTO=TCP</span></div>
<div class="row" style="top:747.3px"><span class="chev"></span><span class="rdiv"></span><span class="c1">Nov 11 5:48:19.000 PM</span><span class="c2">host-demo</span><span class="c3">info</span><span class="c4">2025-11-11T23:48:19+0000 prod-web-01 sshd[5856]: Accepted publickey for admin from 10.0.0.25 port 54541 ssh2: RSA SHA256:abc123</span></div>
<div class="row" style="top:767.3px"><span class="chev"></span><span class="rdiv"></span><span class="c1">Nov 11 5:48:15.000 PM</span><span class="c2">host-demo</span><span class="c3">info</span><span class="c4">2025-11-11T23:48:15+0000 prod-web-01 kernel: [UFW ALLOW] IN=eth0 OUT= MAC= SRC=192.168.1.100 DST=192.168.1.10 LEN=52 PROTO=TCP</span></div>
<div class="row" style="top:787.3px"><span class="chev"></span><span class="rdiv"></span><span class="c1">Nov 11 5:47:30.000 PM</span><span class="c2">host-demo</span><span class="c3">info</span><span class="c4">2025-11-11T23:47:30+0000 prod-web-01 kernel: [UFW ALLOW] IN=eth0 OUT= MAC= SRC=192.168.1.100 DST=192.168.1.10 LEN=52 PROTO=TCP</span></div>
<div class="row" style="top:807.3px"><span class="chev"></span><span class="rdiv"></span><span class="c1">Nov 11 5:47:16.000 PM</span><span class="c2">host-demo</span><span class="c3">info</span><span class="c4">2025-11-11T23:47:16+0000 prod-web-01 systemd[1]: session-714.scope: Succeeded.</span></div>
<div class="row" style="top:827.3px"><span class="chev"></span><span class="rdiv"></span><span class="c1">Nov 11 5:47:05.000 PM</span><span class="c2">host-demo</span><span class="c3">info</span><span class="c4">2025-11-11T23:47:05+0000 prod-web-01 sshd[5622]: Accepted publickey for ubuntu from 10.0.0.25 port 52942 ssh2: RSA SHA256:abc123</span></div>
<div class="row" style="top:847.3px"><span class="chev"></span><span class="rdiv"></span><span class="c1">Nov 11 5:46:48.000 PM</span><span class="c2">host-demo</span><span class="c3">info</span><span class="c4">2025-11-11T23:46:48+0000 prod-web-01 kernel: [UFW ALLOW] IN=eth0 OUT= MAC= SRC=192.168.1.100 DST=192.168.1.10 LEN=52 PROTO=TCP</span></div>
<div class="row" style="top:867.3px"><span class="chev"></span><span class="rdiv"></span><span class="c1">Nov 11 5:45:31.000 PM</span><span class="c2">host-demo</span><span class="c3">info</span><span class="c4">2025-11-11T23:45:31+0000 prod-web-01 systemd[1]: session-832.scope: Succeeded.</span></div>
<div class="row" style="top:887.3px"><span class="chev"></span><span class="rdiv"></span><span class="c1">Nov 11 5:45:22.000 PM</span><span class="c2">host-demo</span><span class="c3">info</span><span class="c4">2025-11-11T23:45:22+0000 prod-web-01 sshd[5505]: Accepted publickey for ubuntu from 10.0.0.25 port 50543 ssh2: RSA SHA256:abc123</span></div>
<div class="row" style="top:907.3px"><span class="chev"></span><span class="rdiv"></span><span class="c1">Nov 11 5:45:08.000 PM</span><span class="c2">host-demo</span><span class="c3">info</span><span class="c4">2025-11-11T23:45:08+0000 prod-web-01 systemd[1]: session-728.scope: Succeeded.</span></div>
<div class="row" style="top:927.3px"><span class="chev"></span><span class="rdiv"></span><span class="c1">Nov 11 5:44:53.000 PM</span><span class="c2">host-demo</span><span class="c3">info</span><span class="c4">2025-11-11T23:44:53+0000 prod-web-01 sshd[5401]: Accepted publickey for ubuntu from 10.0.0.25 port 52244 ssh2: RSA SHA256:abc123</span></div>
<div class="row" style="top:947.3px"><span class="chev"></span><span class="rdiv"></span><span class="c1">Nov 11 5:44:37.000 PM</span><span class="c2">host-demo</span><span class="c3">info</span><span class="c4">2025-11-11T23:44:37+0000 prod-web-01 systemd[1]: session-814.scope: Succeeded.</span></div>
<div class="row" style="top:967.3px"><span class="chev"></span><span class="rdiv"></span><span class="c1">Nov 11 5:44:21.000 PM</span><span class="c2">host-demo</span><span class="c3">info</span><span class="c4">2025-11-11T23:44:21+0000 prod-web-01 kernel: [UFW ALLOW] IN=eth0 OUT= MAC= SRC=192.168.1.100 DST=192.168.1.10 LEN=52 PROTO=TCP</span></div>

<div style="position:absolute;left:1904.4px;top:264px;width:1.6px;height:704px;background:#141518"></div><div style="position:absolute;left:1905px;top:940px;width:1px;height:28px;background:#353535"></div>
<div style="position:absolute;left:0;top:967px;width:1906px;height:1px;background:#4a4c50"></div>
</body></html>
